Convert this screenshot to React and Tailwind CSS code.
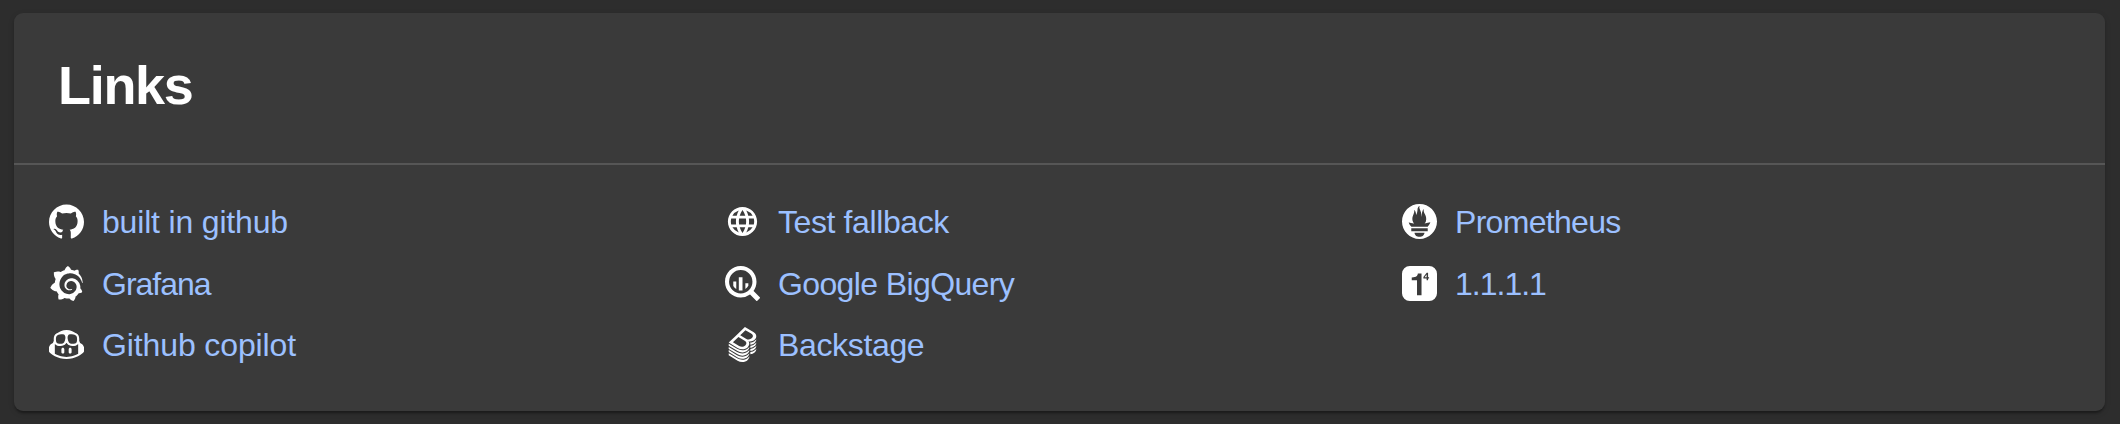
import { SiGithub, SiGrafana, SiGithubcopilot, SiGooglebigquery, SiBackstage, SiPrometheus, Si1Dot1Dot1Dot1 } from 'react-icons/si';
import { MdLanguage } from 'react-icons/md';

const columns = [
  [
    { Icon: SiGithub, label: 'built in github', tracking: 'tracking-[-0.18px]' },
    { Icon: SiGrafana, label: 'Grafana', tracking: 'tracking-[-1px]' },
    { Icon: SiGithubcopilot, label: 'Github copilot', tracking: 'tracking-[-0.12px]' },
  ],
  [
    { Icon: MdLanguage, label: 'Test fallback', tracking: 'tracking-[-0.4px]' },
    { Icon: SiGooglebigquery, label: 'Google BigQuery', tracking: 'tracking-[-0.62px]' },
    { Icon: SiBackstage, label: 'Backstage', tracking: 'tracking-[-0.35px]' },
  ],
  [
    { Icon: SiPrometheus, label: 'Prometheus', tracking: 'tracking-[-0.7px]' },
    { Icon: Si1Dot1Dot1Dot1, label: '1.1.1.1', tracking: 'tracking-[-1px]' },
  ],
];

export default function App() {
  return (
    <div className="h-[424px] w-[2120px] bg-[#2d2d2d] pt-[13px] pl-[14px] font-['Liberation_Sans',Arial,sans-serif]">
      <section className="h-[398px] w-[2091px] rounded-[9px] bg-[#3a3a3a] shadow-[0_4px_2px_-2px_rgba(0,0,0,0.2),0_2px_2px_rgba(0,0,0,0.14),0_2px_6px_rgba(0,0,0,0.12)]">
        <header className="flex h-[152px] items-center border-b-2 border-[#565656] pb-[6px] pl-11">
          <h1 className="text-[54px] leading-[62px] font-bold tracking-[-1.3px] text-white">Links</h1>
        </header>
        <div className="grid grid-cols-[676px_677px_1fr] pt-[26px] pl-[35px]">
          {columns.map((links, i) => (
            <ul key={i}>
              {links.map(({ Icon, label, tracking }) => (
                <li key={label} className="flex h-[62px] items-center last:nth-3:h-[60px]">
                  <Icon className="mb-px size-[35px] text-white" />
                  <a className={`ml-[18px] text-[32px] leading-[46px] text-[#9cc0ff] ${tracking}`}>{label}</a>
                </li>
              ))}
            </ul>
          ))}
        </div>
      </section>
    </div>
  );
}
